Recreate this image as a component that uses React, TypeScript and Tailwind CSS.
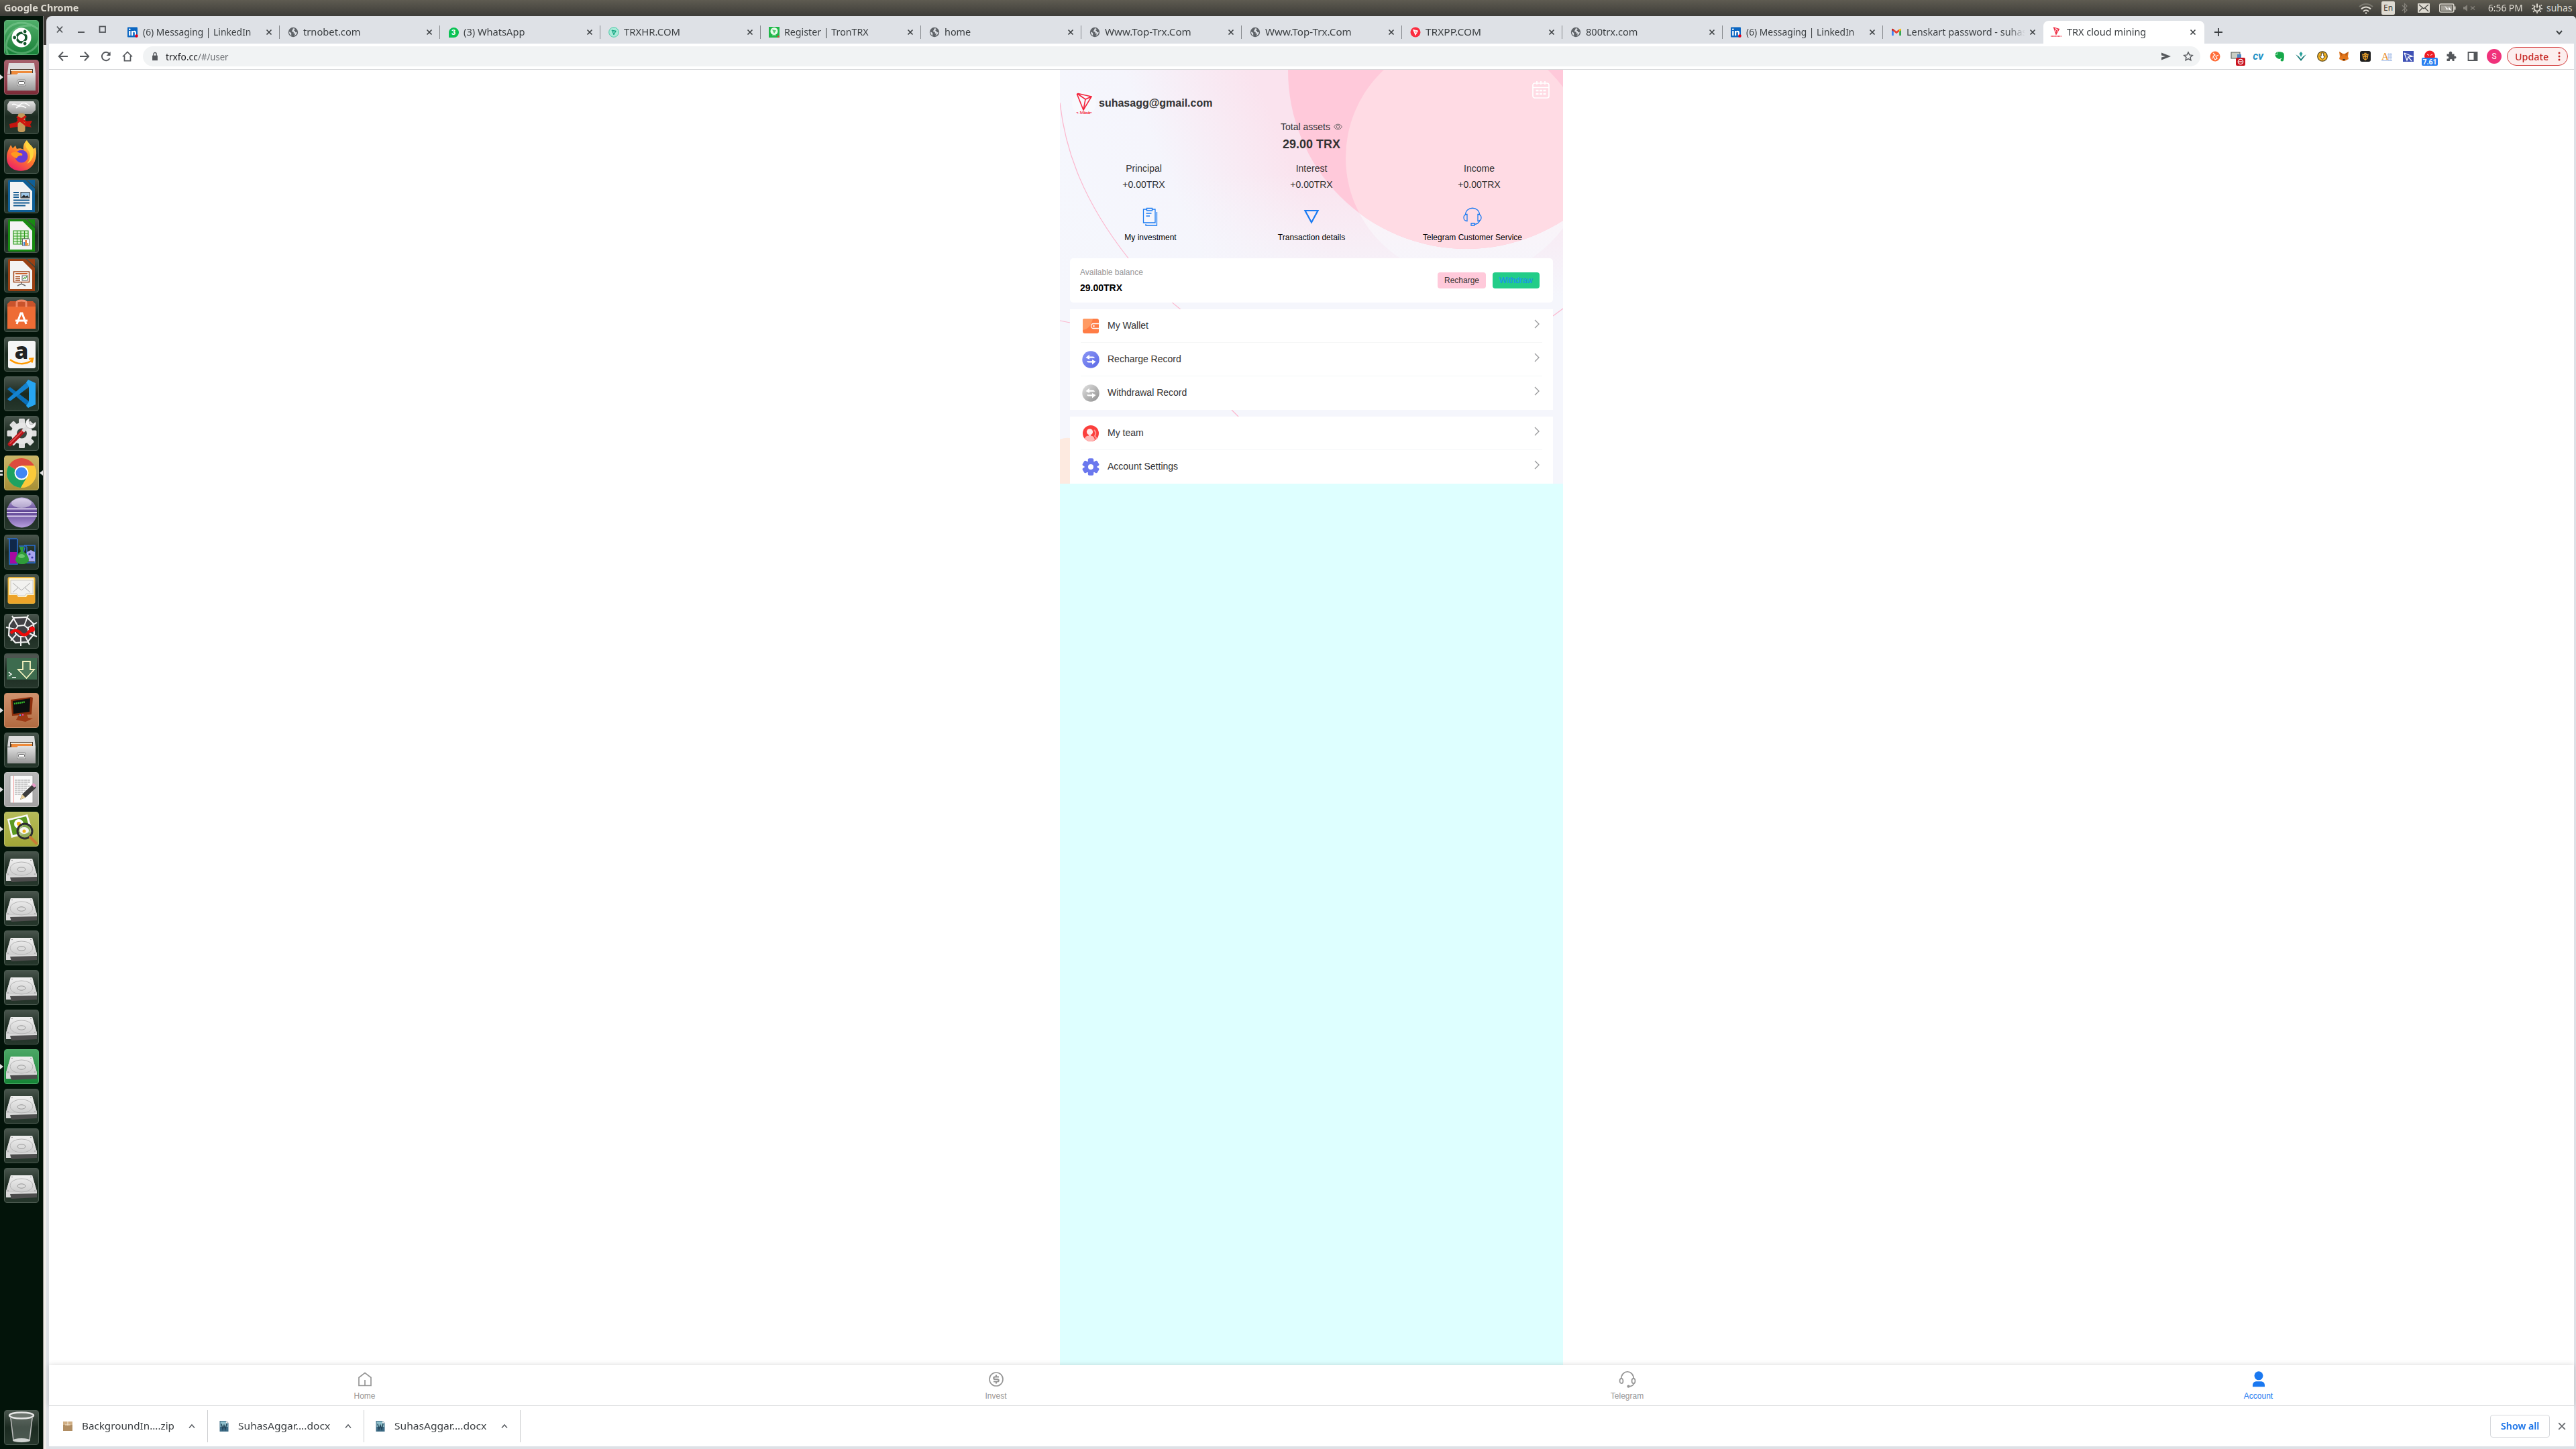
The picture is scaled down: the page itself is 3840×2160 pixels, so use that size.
import React, { useLayoutEffect, useRef, useState } from "react";

/* Text squeezed or stretched to a known run length. */
function Fit({ w, className = "", children }: { w: number; className?: string; children: string }) {
  const ref = useRef<HTMLSpanElement>(null);
  const [k, setK] = useState(1);
  useLayoutEffect(() => {
    if (ref.current) setK(w / ref.current.offsetWidth);
  }, [w]);
  return (
    <span className={`block shrink-0 whitespace-nowrap ${className}`} style={{ width: w }}>
      <span ref={ref} className="inline-block origin-left" style={{ transform: `scaleX(${k})` }}>
        {children}
      </span>
    </span>
  );
}

/* ---------- favicons ---------- */
const Globe = () => (
  <svg viewBox="0 0 16 16" className="size-4 shrink-0">
    <circle cx="8" cy="8" r="7.2" fill="#5f6368" />
    <path d="M9 2.2c-1.600.3-2.200 1.100-1.600 2 .5.800-1.800 1-1.500 2.200.2.900 1.900.5 2.600 1.300.6.900-.2 1.400.4 2.200.5.600 1.300-.4 2 .3.500.700-.8 1.900-1.900 2.900 3-.3 4.800-2.700 4.700-5.300-1.500 1-2.600.3-2.700-.9 0-1.200-1.800-.5-1.700-1.700.1-1 1.400-.7 1.400-1.600 0-.700-.7-1.200-1.700-1.400zM2 7.500c1.300.2 2.700 1 3.200 2.100.4 1-.4 1.800.2 3.600C3.300 12.300 2 10.200 2 7.500z" fill="#dee1e6" />
  </svg>
);
const LinkedIn = () => (
  <svg viewBox="0 0 16 16" className="size-4 shrink-0">
    <rect width="15" height="15" x="0" y="0.500" rx="1" fill="#0a66c2" />
    <rect x="2.200" y="6" width="2.200" height="7" fill="#fff" />
    <circle cx="3.300" cy="3.700" r="1.300" fill="#fff" />
    <path d="M6 6h2.100v1c.5-.8 1.300-1.200 2.300-1.200 2 0 2.600 1.300 2.600 3.200v4h-2.200V9.500c0-1-.2-1.800-1.200-1.800s-1.400.8-1.400 1.800V13H6z" fill="#fff" />
    <circle cx="13.500" cy="13.500" r="2.300" fill="#e0001b" />
  </svg>
);
const WhatsApp = () => (
  <span className="flex size-4 shrink-0 items-center justify-center">
    <span className="flex size-[15px] items-center justify-center rounded-full rounded-bl-[3px] bg-[#0bc254] font-['Liberation_Sans'] text-[11px] leading-none font-bold text-white">3</span>
  </span>
);
const Trxhr = () => (
  <svg viewBox="0 0 16 16" className="size-4 shrink-0">
    <circle cx="8" cy="8" r="7.300" fill="#a9ead8" stroke="#4fc9a8" />
    <path d="M5 5l6.300 1.200L8 11.800zM5 5l3.200 2.600L11.300 6.200M8.200 7.600L8 11.800" fill="none" stroke="#10a37f" strokeWidth="1" />
  </svg>
);
const TronTrx = () => (
  <svg viewBox="0 0 16 16" className="size-4 shrink-0">
    <rect width="16" height="16" fill="#1fb848" />
    <circle cx="8" cy="6.500" r="5.500" fill="#e6fbe9" />
    <path d="M5 4l6 1.200L8 10zM5 12h6v1.500H5z" fill="#5cc877" />
    <circle cx="14.200" cy="14.500" r="1.300" fill="#e53935" />
  </svg>
);
const Trxpp = () => (
  <svg viewBox="0 0 16 16" className="size-4 shrink-0">
    <circle cx="8" cy="8" r="7.500" fill="#fb2c3f" />
    <path d="M4.800 4.500l6.500 1.500L8 12zM4.800 4.500l3.400 3L11.300 6M8.200 7.500L8 12" fill="none" stroke="#fff" strokeWidth="1.100" />
  </svg>
);
const Gmail = () => (
  <svg viewBox="0 0 16 16" className="size-4 shrink-0">
    <path d="M1 4v9h2.800V6.500z" fill="#4285f4" />
    <path d="M15 4v9h-2.800V6.500z" fill="#34a853" />
    <path d="M3.800 3.500L8 6.700l4.200-3.200v3.600L8 10.300 3.800 7.100z" fill="#ea4335" />
    <path d="M1 4.200c0-1.500 1.600-1.900 2.800-.9v3.800L1 5z" fill="#c5221f" />
    <path d="M15 4.200c0-1.500-1.600-1.900-2.800-.9v3.800L15 5z" fill="#fbbc04" />
  </svg>
);
const TrxMining = () => (
  <svg viewBox="0 0 16 16" className="size-4 shrink-0">
    <path d="M4.500 1l8 2.300-4.500 8zM4.500 1l4 4.500 4-2.200M8.500 5.500L8 11.300" fill="none" stroke="#ef2a41" strokeWidth="1.100" />
    <path d="M0 14h16" stroke="#ef2a41" strokeWidth="1.500" strokeDasharray="1.500 .6" />
  </svg>
);

const X = ({ className = "" }: { className?: string }) => (
  <svg viewBox="0 0 10 10" className={`size-[10px] shrink-0 ${className}`}>
    <path d="M1.500 1.500l7 7M8.500 1.500l-7 7" stroke="currentColor" strokeWidth="1.700" />
  </svg>
);

const tabs: { icon: React.ReactNode; text: string; w: number }[] = [
  { icon: <LinkedIn />, text: "(6) Messaging | LinkedIn", w: 161 },
  { icon: <Globe />, text: "trnobet.com", w: 86 },
  { icon: <WhatsApp />, text: "(3) WhatsApp", w: 92 },
  { icon: <Trxhr />, text: "TRXHR.COM", w: 84 },
  { icon: <TronTrx />, text: "Register | TronTRX", w: 126 },
  { icon: <Globe />, text: "home", w: 39 },
  { icon: <Globe />, text: "Www.Top-Trx.Com", w: 129 },
  { icon: <Globe />, text: "Www.Top-Trx.Com", w: 129 },
  { icon: <Trxpp />, text: "TRXPP.COM", w: 83 },
  { icon: <Globe />, text: "800trx.com", w: 77 },
  { icon: <LinkedIn />, text: "(6) Messaging | LinkedIn", w: 161 },
  { icon: <Gmail />, text: "Lenskart password - suhasagg", w: 205 },
];

/* ---------- launcher ---------- */
const Ubuntu = () => (
  <>
    <path d="M0 22C8 2 30-2 52 14M6 52C-4 30 14 6 40 8M52 30C46 50 22 56 4 40" fill="none" stroke="#8fd3a0" strokeWidth="3" opacity=".45" />
    <circle cx="26" cy="26" r="14.500" fill="#fff" />
    <circle cx="26" cy="26" r="7" fill="none" stroke="#12572b" strokeWidth="3.600" />
    {[60, 180, 300].map((a) => (
      <g key={a} transform={`rotate(${a} 26 26)`}>
        <circle cx="36" cy="26" r="3.700" fill="#fff" />
        <circle cx="36.300" cy="26" r="2.400" fill="#12572b" />
      </g>
    ))}
  </>
);
const Files = () => (
  <>
    <path d="M7 5h38l2 16H5z" fill="#dcdcdc" />
    <rect x="9" y="14" width="34" height="9" fill="#4a3a2c" />
    <path d="M10 15h32v2H10z" fill="#f3ead8" />
    <path d="M11 17h31v6H11z" fill="#ee8a3a" />
    <path d="M5 22h14l2-2h26v26H5z" fill="url(#metal)" />
    <rect x="19.500" y="30" width="13" height="9" rx="2" fill="#d9d9d9" stroke="#8b8b8b" />
    <rect x="21.500" y="32.500" width="9" height="4" rx="1" fill="#fff" stroke="#666" />
  </>
);
const Gavel = () => (
  <>
    <path d="M8 3h36l3 5v8l-6 6H12l-7-6V8z" fill="url(#metal)" />
    <path d="M12 8c5-3 8 4 12 0s8-3 14 2M18 13c4-4 10-4 15 0" fill="none" stroke="#fff" strokeWidth="1.500" />
    <path d="M8 37c8-4 24-4 34-5l-3 6 2 4c-10-3-22-1-32 1z" fill="#c3150f" />
    <rect x="20.500" y="21" width="11" height="28" rx="4" fill="#c49a5a" />
    <path d="M19 26l14 8M33 25l-14 10M20 29c5 4 9 6 13 10" stroke="#d0150f" strokeWidth="3" />
  </>
);
const Firefox = () => (
  <>
    <path d="M4 27C4 19 8 14 10 9l3 5 4-4 2 5c3-1 7-1 10 1-1-5 1-11 5-14 3 6 8 8 10 13l3-2c3 10 0 25-9 31-7 5-19 5-26 0C6 40 4 34 4 27z" fill="url(#ff)" />
    <circle cx="26" cy="26" r="9.500" fill="#6a3bd6" />
    <path d="M10 22c4-3 9-3 13-1 4 0 5 2 4 4-4-1-7 1-8 4-3-1-7-3-9-7z" fill="#ff9a1f" />
    <path d="M36 17c5 7 3 15-2 20 8-3 12-13 9-22-2-4-6-8-9-12-3 5-2 10 2 14z" fill="#ffd63c" />
  </>
);
function Doc({ c, children }: { c: string; children: React.ReactNode }) {
  return (
    <>
      <path d="M8 2h24l14 13v35H8a2 2 0 0 1-2-2V4a2 2 0 0 1 2-2z" fill={c} />
      <path d="M9 5h19l14 14v28H9z" fill="#f3f3f3" />
      <path d="M34 2h12v11z" fill={c} />
      {children}
    </>
  );
}
const Writer = () => (
  <Doc c="#0f5f97">
    <path d="M14 21h8M14 24.500h8M14 28h8M14 32.500h24M14 36.500h24M14 40.500h18" stroke="#125a91" strokeWidth="2" />
    <rect x="25" y="20.500" width="13" height="8.500" fill="#9fc7e8" stroke="#333" />
    <path d="M25.500 28.500l4-4 3 2.500 2-2 3 3.500z" fill="#222" />
  </Doc>
);
const Calc = () => (
  <Doc c="#188a12">
    <rect x="14" y="19" width="22" height="20" fill="#d8f3d0" />
    <path d="M14 19h22v20H14zM14 23h22M14 27h22M14 31h22M14 35h22M19.500 19v20M25 19v20M30.500 19v20" fill="none" stroke="#2f9a20" strokeWidth="1.200" />
    <rect x="27.500" y="31" width="10" height="10" fill="#fff" stroke="#666" />
    <path d="M29 36h2.300v5H29z" fill="#3a8bd8" /><path d="M31.500 33h2.300v8h-2.300z" fill="#e06b1d" /><path d="M34 37h2.300v4H34z" fill="#e8b03c" />
  </Doc>
);
const Impress = () => (
  <Doc c="#9a4013">
    <rect x="14.500" y="21" width="23" height="15.500" fill="#fff" stroke="#a0461a" strokeWidth="1.500" />
    <path d="M17 24h18" stroke="#c8622c" strokeWidth="2" />
    <path d="M17 28.500h7M17 31.500h7M17 34h7" stroke="#a0461a" strokeWidth="1.600" />
    <rect x="27" y="27" width="8" height="7" fill="#fff" stroke="#555" />
    <path d="M28.500 32l2-2 1.500 1 2-3" stroke="#2f9a20" fill="none" strokeWidth="1.200" />
    <path d="M26 37v2M20 42l6-3 6 3" stroke="#666" strokeWidth="1.500" fill="none" />
  </Doc>
);
const Software = () => (
  <>
    <path d="M5 10l4-4h34l4 4v6H5z" fill="#c9532b" />
    <path d="M5 14h42v33H5z" fill="#ee6c35" />
    <path d="M19 15V8c0-4 14-4 14 0v7" fill="none" stroke="#f08a68" strokeWidth="3" />
    <path d="M19 40l6-16h2l6 16M17 35h18" fill="none" stroke="#fff" strokeWidth="3" />
  </>
);
const Amazon = () => (
  <>
    <rect x="6" y="6" width="41" height="41" rx="3" fill="#f5f5f5" />
    <text x="26" y="33" textAnchor="middle" fontFamily="Open Sans, sans-serif" fontWeight="800" fontSize="33" fill="#222">a</text>
    <path d="M9 34c10 8 23 8 33 1M37 33l6-.5-1.500 6" fill="none" stroke="#ff9900" strokeWidth="2.500" />
  </>
);
const VsCode = () => (
  <>
    <path d="M5 19l4-3 28 21v9z" fill="#0a6fb8" />
    <path d="M5 34l4 3 28-21V6z" fill="#1483d0" />
    <path d="M36 5l11 5v32l-11 5-3-3 4-6V15l-4-6z" fill="#27a5f2" />
  </>
);
const Settings = () => (
  <>
    {[0, 45, 90, 135].map((a) => (
      <rect key={a} x="22" y="4" width="9" height="44" rx="1.500" fill="#dedede" transform={`rotate(${a} 26.500 26)`} />
    ))}
    <circle cx="26.500" cy="26" r="16" fill="#e6e6e6" />
    <circle cx="26.500" cy="26" r="7.500" fill="#3b4640" />
    <path d="M9 42L28 23" stroke="#b9151b" strokeWidth="6.500" strokeLinecap="round" />
    <path d="M9 41L27 23" stroke="#e65a5a" strokeWidth="1.500" strokeLinecap="round" />
    <path d="M28 23l8-8" stroke="#dcdcdc" strokeWidth="5" />
    <path d="M38 4c-5 1-7 6-5 10 2 5 8 6 12 3 2-2 3-5 2-8l-5 4-4-1-1-4z" fill="#f4f4f4" stroke="#999" strokeWidth=".6" />
  </>
);
const Chrome = () => (
  <>
    <circle cx="26" cy="26" r="22" fill="#fbc93a" />
    <path d="M26 26L7 15A22 22 0 0 1 45 15H26z" fill="#dd4b3e" />
    <path d="M7 15A22 22 0 0 0 25 48l10-17-9-5z" fill="#1da261" />
    <path d="M26 15h19a22 22 0 0 1-20 33l10-17z" fill="#fbc93a" />
    <circle cx="26" cy="26" r="10.500" fill="#fff" />
    <circle cx="26" cy="26" r="8.500" fill="#4086f4" />
  </>
);
const Eclipse = () => (
  <>
    <circle cx="26.500" cy="26" r="22.500" fill="url(#ecl)" />
    <path d="M4 20.500h45M4 26h45M4 31.500h45" stroke="#d9cdec" strokeWidth="2" />
    <path d="M4 23h45M4 29h45" stroke="#6a519e" strokeWidth="2" />
    <ellipse cx="26" cy="12" rx="15" ry="7" fill="#fff" opacity=".45" />
  </>
);
const Flasks = () => (
  <>
    <path d="M5 6h14M8 6v38h12V6" fill="#10284a" stroke="#2a6fd0" strokeWidth="1.500" />
    <path d="M9 26h10v17H9z" fill="#a60aa0" />
    <path d="M22 17h12M31 19l-2 8M30 16h16v26H34V18" fill="none" stroke="#2a6fd0" strokeWidth="1.500" />
    <path d="M34 26l6-3 6 3v14H32z" fill="#a8a5f0" />
    <circle cx="38" cy="29" r="1.600" fill="#3c3aa8" /><circle cx="42" cy="34" r="1.600" fill="#3c3aa8" />
    <path d="M23 18h7l-2 7c6 3 9 8 9 13-2 8-18 8-20 0 0-5 4-10 8-13z" fill="#2f9d3a" />
    <ellipse cx="26" cy="32" rx="5" ry="3" fill="#8fe08f" opacity=".6" />
  </>
);
const Mail = () => (
  <>
    <rect x="6.500" y="5" width="39" height="38" rx="2" fill="#fdf3cf" stroke="#e8b33a" strokeWidth="2" />
    <path d="M6 31h13l2 3h12l2-3h11v12H6z" fill="#eda42a" />
    <path d="M10 9h33v20H33l-2 3H21l-2-3h-9z" fill="#f2f2f0" stroke="#bbb" strokeWidth=".7" />
    <path d="M13 13l13 11 13-11M13 27l8-7M39 27l-8-7" fill="none" stroke="#aaa" strokeWidth="1" />
  </>
);
const Web = () => (
  <>
    <path d="M15 6l19-1 10 10 1 15-10 12-18 1L7 32 8 16z" fill="#414145" stroke="#efefef" strokeWidth="2.200" />
    <path d="M12 3l9 16M36 2l-6 16M49 13l-14 8M49 34l-14-6M38 46l-7-14M25 48v-14M10 40l9-10M3 20l14 3" stroke="#efefef" strokeWidth="2" />
    <path d="M21 18l9-1 6 5v7l-6 5h-7l-6-5v-6z" fill="none" stroke="#efefef" strokeWidth="2" />
    <path d="M10 29c6-6 10-5 15 0s9 2 13-3l6-4" fill="none" stroke="#ee0a0a" strokeWidth="4.500" />
    <circle cx="42" cy="23" r="4" fill="#ee0a0a" />
  </>
);
const DownTerm = () => (
  <>
    <rect x="4" y="6" width="45" height="33" fill="#3d6b4e" />
    <rect x="2" y="2" width="49" height="5" fill="#4d5550" />
    <path d="M7 28l4 3-4 3M12 36h6" fill="none" stroke="#fff" strokeWidth="1.500" />
    <path d="M28 12h11v12h6L33.500 37 21 24h7z" fill="#4f7a5c" stroke="#f5f3c0" strokeWidth="1.800" />
  </>
);
const Terminal = () => (
  <>
    <path d="M10 10l30-4 3 1-2 25-29 2z" fill="#8c2f0c" />
    <path d="M13 12l26-4-1 20-24 3z" fill="#0c0f0e" />
    <path d="M15 16l16-2.500" stroke="#35b52a" strokeWidth="2.500" strokeDasharray="2 .8" />
    <path d="M22 33l12-1 2 5 7 1-11 5-14-3z" fill="#9c3a15" />
    <circle cx="24" cy="33" r="1.200" fill="#4af" /><circle cx="28" cy="32.500" r="1.200" fill="#f4a" />
  </>
);
const Editor = () => (
  <>
    <rect x="9" y="5" width="34" height="41" rx="1" fill="#fafafa" stroke="#9a9a9a" />
    <path d="M14.500 5v41" stroke="#f2a3a3" />
    <path d="M16 12h23M16 15h23M16 18h20M16 21h23M16 24h18M16 27h16M16 30h12M16 33h9" stroke="#9a9a9a" strokeWidth="1" strokeDasharray="4 .7" />
    <path d="M24 41l3-8 16-15 5 5-16 15z" fill="#3d3d3d" />
    <path d="M41 19l3-3 4 4-3 3z" fill="#e59ac6" />
    <path d="M24 41l3-8 5 5z" fill="#e8cf9a" />
  </>
);
const Viewer = () => (
  <>
    <path d="M5 11l30-7 8 26-32 9z" fill="#fafafa" />
    <path d="M8 13l25-6 6 21-26 7z" fill="#5c9a22" />
    <circle cx="22" cy="18" r="7" fill="#fff" /><circle cx="22" cy="18" r="3" fill="#f0b21a" />
    <circle cx="31" cy="29" r="11" fill="#8fae62" fillOpacity=".75" stroke="#2d2d30" strokeWidth="3" />
    <ellipse cx="30" cy="28" rx="7" ry="5" fill="#f7f7f2" />
    <circle cx="30" cy="29" r="2.500" fill="#f0b21a" />
    <path d="M39 38l9 9" stroke="#c97b35" strokeWidth="4" strokeLinecap="round" />
  </>
);
const Disk = () => (
  <>
    <path d="M10 11h32l7 24v9H3v-9z" fill="#c8c8c8" />
    <path d="M10 11h32l7 24H3z" fill="url(#disk)" />
    <path d="M3 36h46v8H3z" fill="#d9d9d9" />
    <path d="M9 39l40-1v6l-38 2z" fill="#4c4c4c" />
    <ellipse cx="26" cy="26" rx="17" ry="10" fill="none" stroke="#b5b5b5" />
    <ellipse cx="26" cy="27" rx="6" ry="3.200" fill="#dcdcdc" stroke="#999" />
    <circle cx="12" cy="13.500" r=".8" fill="#888" /><circle cx="40" cy="13.500" r=".8" fill="#888" /><circle cx="6" cy="34" r=".8" fill="#888" /><circle cx="46" cy="34" r=".8" fill="#888" />
  </>
);
const Trash = () => (
  <>
    <path d="M9 11h34l-4 35c-6 3-20 3-26 0z" fill="#a8b0ab" opacity=".3" />
    <path d="M10 12l4 33M42 12l-4 33" stroke="#bcbcbc" strokeWidth="1.500" />
    <ellipse cx="26" cy="8" rx="18" ry="4.500" fill="#6d756f" stroke="#e6e6e6" strokeWidth="2.500" />
    <ellipse cx="26" cy="45" rx="13" ry="3" fill="#cfd3d0" />
  </>
);

const glass = "bg-linear-to-b from-[#49554d] via-[#1b2a20] to-[#26372c] border-[#4b5a50]";
const apps: { el: React.ReactNode; bg: string; mark?: "one" | "chrome" }[] = [
  { el: <Ubuntu />, bg: "bg-linear-to-b from-[#4fae6a] to-[#168038] border-[#5fb377]" },
  { el: <Files />, bg: "bg-linear-to-b from-[#a6616c] to-[#7d2b38] border-[#a0606a]", mark: "one" },
  { el: <Gavel />, bg: glass },
  { el: <Firefox />, bg: glass },
  { el: <Writer />, bg: glass },
  { el: <Calc />, bg: glass },
  { el: <Impress />, bg: glass },
  { el: <Software />, bg: glass },
  { el: <Amazon />, bg: glass },
  { el: <VsCode />, bg: glass },
  { el: <Settings />, bg: glass },
  { el: <Chrome />, bg: "bg-linear-to-b from-[#c9b566] to-[#a68f35] border-[#c4b56f]", mark: "chrome" },
  { el: <Eclipse />, bg: glass },
  { el: <Flasks />, bg: glass },
  { el: <Mail />, bg: glass },
  { el: <Web />, bg: glass },
  { el: <DownTerm />, bg: glass },
  { el: <Terminal />, bg: "bg-linear-to-b from-[#d0936d] to-[#b06a40] border-[#c98d68]", mark: "one" },
  { el: <Files />, bg: glass },
  { el: <Editor />, bg: "bg-linear-to-b from-[#b9b9b9] to-[#a2a2a2] border-[#c4c4c4]", mark: "one" },
  { el: <Viewer />, bg: "bg-linear-to-b from-[#b5bb59] to-[#a1a637] border-[#b9be68]", mark: "one" },
  ...[0, 1, 2, 3, 4].map(() => ({ el: <Disk />, bg: glass })),
  { el: <Disk />, bg: "bg-linear-to-b from-[#4aa765] to-[#138436] border-[#4fae6a]", mark: "one" as const },
  ...[0, 1, 2].map(() => ({ el: <Disk />, bg: glass })),
];

function Tile({ el, bg, mark }: { el: React.ReactNode; bg: string; mark?: "one" | "chrome" }) {
  return (
    <div className="flex h-[52px] w-16 shrink-0 items-center">
      <svg viewBox="0 0 6 12" className="h-3 w-[6px] shrink-0">
        {mark === "one" && <path d="M0 2l5 4-5 4z" fill="#e2e2e2" />}
        {mark === "chrome" && <path d="M0 2h4v3H0zM0 7h4v3H0z" fill="#e2e2e2" />}
      </svg>
      <div className={`size-[52px] shrink-0 rounded-[4px] border ${bg}`}>
        <svg viewBox="1 1 50 50" className="size-full">{el}</svg>
      </div>
      <svg viewBox="0 0 6 12" className="h-3 w-[6px] shrink-0">
        {mark === "chrome" && <path d="M6 2L1 6l5 4z" fill="#e2e2e2" />}
      </svg>
    </div>
  );
}

function Launcher() {
  return (
    <div className="flex h-[2136px] w-16 shrink-0 flex-col justify-between overflow-hidden bg-[#03140a] pt-[6px] pb-[6px]">
      <svg className="absolute size-0">
        <defs>
          <linearGradient id="metal" x2="0" y2="1"><stop stopColor="#e4e4e4" /><stop offset="1" stopColor="#989898" /></linearGradient>
          <linearGradient id="disk" x2="0" y2="1"><stop stopColor="#f0f0f0" /><stop offset="1" stopColor="#cfcfcf" /></linearGradient>
          <linearGradient id="ff" x1=".8" y1="0" x2=".2" y2="1"><stop stopColor="#ffe24a" /><stop offset=".5" stopColor="#ff7b2b" /><stop offset="1" stopColor="#ec1a6b" /></linearGradient>
          <linearGradient id="ecl" x2="0" y2="1"><stop stopColor="#c3b3e0" /><stop offset=".45" stopColor="#5a4190" /><stop offset="1" stopColor="#b9a0e0" /></linearGradient>
        </defs>
      </svg>
      <div className="flex flex-col gap-[7px]">
        {apps.map((a, i) => <Tile key={i} {...a} />)}
      </div>
      <Tile el={<Trash />} bg={glass} />
    </div>
  );
}

/* ---------- desktop panel ---------- */
function TopPanel() {
  return (
    <div className="flex h-6 items-center justify-between bg-linear-to-b from-[#5e5b51] to-[#3d3c38] pr-[5px] pl-[6px] font-['Noto_Sans',sans-serif] text-[#dfdbd2]">
      <Fit w={111} className="text-[14px] leading-6 font-bold">Google Chrome</Fit>
      <div className="flex items-center">
        <svg viewBox="0 0 24 20" className="mr-[11px] h-5 w-6" fill="none" strokeWidth="2">
          <path d="M2 8c6-5.500 14-5.500 20 0" stroke="#7b7970" />
          <path d="M5 11.500c4-4 10-4 14 0M8 15c2.500-2.500 5.500-2.500 8 0" stroke="#dfdbd2" />
          <circle cx="12" cy="17.500" r="1.200" fill="#dfdbd2" stroke="none" />
        </svg>
        <span className="mr-[10px] flex h-5 w-5 items-center justify-center rounded-[2px] bg-[#dfdbd2] text-[12px] text-[#3c3b37]">En</span>
        <svg viewBox="0 0 10 16" className="mr-[14px] h-4 w-[10px]"><path d="M1 4l7 7-3.500 3.500v-13L8 5l-7 7" fill="none" stroke="#85827a" strokeWidth="1.200" /></svg>
        <svg viewBox="0 0 18 14" className="mr-[14px] h-[14px] w-[18px]"><rect width="18" height="14" rx="1" fill="#dfdbd2" /><path d="M2 2l7 6 7-6M2 12l5-5M16 12l-5-5" fill="none" stroke="#45443f" strokeWidth="1.300" /></svg>
        <svg viewBox="0 0 25 14" className="mr-[10px] h-[14px] w-[25px]"><rect x=".8" y="1" width="21" height="12" rx="1.500" fill="none" stroke="#dfdbd2" strokeWidth="1.500" /><rect x="3" y="3" width="16.500" height="8" fill="#a19e96" /><path d="M22.500 4.500h2v5h-2z" fill="#dfdbd2" /><path d="M8 3.500l6 5.500.5-4 4 6-6-2.500-.5 2z" fill="#fff" /></svg>
        <svg viewBox="0 0 20 14" className="mr-[18px] h-[14px] w-5"><path d="M1 5h2.500L7 2v10L3.500 9H1z" fill="#85827a" /><path d="M12 4.500l6 5M18 4.500l-6 5" stroke="#85827a" strokeWidth="1.500" /></svg>
        <Fit w={52} className="mr-[13px] text-[14px] leading-6">6:56 PM</Fit>
        <svg viewBox="0 0 16 16" className="mr-[6px] size-4" fill="none" stroke="#dfdbd2">
          <path d="M5 4.600a4.600 4.600 0 1 0 6 0M8 1.500v6" strokeWidth="2" />
          <path d="M2.600 4.500L1 3.500M13.400 4.500L15 3.500M1.800 9H0M14.200 9H16M3.600 12.400l-1.300 1.400M12.400 12.400l1.300 1.400M8 14v2" strokeWidth="1.800" />
        </svg>
        <Fit w={39} className="text-[14px] leading-6">suhas</Fit>
      </div>
    </div>
  );
}

/* ---------- browser chrome ---------- */
function TabStrip() {
  return (
    <div className="flex h-[41px] items-end rounded-tl-[8px] rounded-tr-[5px] bg-[#dee1e6] font-['Noto_Sans',sans-serif] text-[14px] text-[#3c4043]">
      <div className="flex h-[41px] w-[109px] shrink-0 items-center gap-5 pl-[14px] text-[#55585c]">
        <svg viewBox="0 0 12 12" className="mb-px size-3"><path d="M2 1.500l8 9M10 1.500l-8 9" stroke="currentColor" strokeWidth="1.800" /></svg>
        <svg viewBox="0 0 12 12" className="size-3"><path d="M1 9h10" stroke="currentColor" strokeWidth="2" /></svg>
        <svg viewBox="0 0 12 12" className="mb-px size-3"><rect x="1.500" y="1.500" width="8.500" height="8.500" fill="none" stroke="currentColor" strokeWidth="1.800" /></svg>
      </div>
      {tabs.map((t, i) => (
        <div key={i} className="flex h-[34px] w-[239px] shrink-0 items-center pl-3">
          {t.icon}
          <div className={`ml-[7px] w-[177px] overflow-hidden ${i === 11 ? "mask-r-from-85% mask-r-to-100%" : ""}`}>
            <Fit w={t.w} className="leading-5">{t.text}</Fit>
          </div>
          <X className="ml-[6px]" />
          {i < 11 && <span className="ml-auto h-5 w-px bg-[#85888c]" />}
        </div>
      ))}
      <div className="flex h-[34px] w-[240px] shrink-0 items-center rounded-t-[8px] bg-white pl-[11px]">
        <TrxMining />
        <Fit w={118} className="ml-2 leading-5">TRX cloud mining</Fit>
        <X className="ml-[65px]" />
      </div>
      <svg viewBox="0 0 14 14" className="mb-[10px] ml-[14px] size-[14px]"><path d="M7 1v12M1 7h12" stroke="#3c4043" strokeWidth="1.800" /></svg>
      <svg viewBox="0 0 12 12" className="mr-[19px] mb-[11px] ml-auto size-3"><path d="M2 4l4 4.500L10 4" fill="none" stroke="#3c4043" strokeWidth="1.900" /></svg>
    </div>
  );
}

const extensions: React.ReactNode[] = [
  <><circle cx="8" cy="8" r="7.500" fill="#ff6c37" /><path d="M5 3l3 3-3 2 3 5 3-2-2-3 4-2M3 11l2-1" fill="none" stroke="#fff" strokeWidth="1.200" /></>,
  <><rect x="0" y="2" width="13" height="9" fill="#c9cec4" stroke="#555b55" /><rect x="9" y="5" width="6" height="6" fill="#4d86c4" /><rect x="7" y="10" width="14" height="12" rx="2" fill="#c9131f" /><circle cx="14" cy="16" r="3.700" fill="none" stroke="#fff" strokeWidth="1.300" /><path d="M11.500 16h5" stroke="#fff" strokeWidth="1.300" /></>,
  <><text x="8" y="12.500" textAnchor="middle" fontFamily="Roboto, sans-serif" fontWeight="900" fontStyle="italic" fontSize="12" fill="#1b8fc4">CV</text></>,
  <><path d="M5 1.500C9 .5 14 2 14.500 4c.8 4 .3 9-1 11-1.500 1-4 .5-4-1.500 0-1.200 1-1.700 2-1.500-.5-1.500-2-1-3 0C5 12 1.500 9 1.500 5.500H5z" fill="#16a84a" /><path d="M4.500 1L1 4.700h3.500z" fill="#16a84a" /></>,
  <><path d="M0 5l4.500 3L8 12l3.500-4L16 5 8 15z" fill="#157a77" /><path d="M8 1l2.500 3L8 9 5.500 4z" fill="#2aa19b" /></>,
  <><circle cx="8" cy="8" r="7.200" fill="#fbb826" stroke="#4b3b12" strokeWidth="1.300" /><path d="M6.200 3h3.600v4.500h2.500L8 12.500 3.700 7.500h2.500z" fill="#fff" stroke="#4b3b12" /></>,
  <><path d="M1 1l5 3h4l5-3-1 7 1 4-4 2-2 1H7l-2-1-4-2 1-4z" fill="#e2761b" /><path d="M1 1l5 3-1 4zM15 1l-5 3 1 4z" fill="#b85a15" /><path d="M6 12h4l-1 2H7z" fill="#3a3a3a" /></>,
  <><rect width="16" height="16" rx="3" fill="#1f1f1f" /><path d="M4 5l3 1V3.500h2V6l3-1-1 6-3 2.500L5 11zM8 6v7M5 8.500h6" fill="none" stroke="#f2a52a" strokeWidth="1.300" /></>,
  <><path d="M9 5h7M9 7.500h7M9 10h7M0 14.500h16M11 3v12M14 3v12" stroke="#a9c0e8" strokeWidth="1" /><text x="5.500" y="13" textAnchor="middle" fontFamily="Liberation Serif, serif" fontSize="15" fill="#e8912c">A</text></>,
  <><rect width="16" height="16" fill="#3f51b5" /><path d="M2 3l12 5-6 1 5 6M2 3l4 11 2-5" fill="none" stroke="#fff" strokeWidth="1.300" /></>,
  <><circle cx="8" cy="7.500" r="8" fill="#ee1c25" /><path d="M4 5l3 1.500M12 5L9 6.500" stroke="#fff" /><rect x="-4" y="10" width="24" height="12" rx="2" fill="#2a7ff0" /><text x="8" y="20" textAnchor="middle" fontFamily="Roboto, sans-serif" fontWeight="700" fontSize="10.500" fill="#fff">7.61</text></>,
  <><path d="M1.500 4.500H5C4 2 5.500.8 7 .8s3 1.200 2 3.700h3.500V8c2-.8 3 .4 3 1.600s-1 2.400-3 1.700V15H9.500c.7-2.200-.4-3-1.700-3s-2.500.8-1.800 3H1.500v-3.500c2 .5 2.700-.6 2.700-1.700S3.500 7.700 1.500 8.300z" fill="#54575b" /></>,
  <><path d="M1.500 2h13v12h-13z" fill="none" stroke="#54575b" strokeWidth="1.800" /><path d="M9.500 2h5v12h-5z" fill="#54575b" /></>,
];

function Toolbar() {
  return (
    <div className="flex h-[39px] items-center border-b border-[#d6d7d9] bg-white font-['Noto_Sans',sans-serif] text-[14px] text-[#54575b]">
      <div className="flex w-[140px] shrink-0 gap-4 pl-[13px]">
        <svg viewBox="0 0 16 16" className="size-4" fill="none" stroke="currentColor" strokeWidth="1.900"><path d="M15 8H2M8 1.500L1.800 8 8 14.500" /></svg>
        <svg viewBox="0 0 16 16" className="size-4" fill="none" stroke="currentColor" strokeWidth="1.900"><path d="M1 8h13M8 1.500L14.200 8 8 14.500" /></svg>
        <svg viewBox="0 0 16 16" className="size-4" fill="none" stroke="currentColor" strokeWidth="1.900"><path d="M13.500 11A6.200 6.200 0 1 1 12.800 4L14 5.500" /><path d="M14.600 1v6H8.700z" fill="currentColor" stroke="none" /></svg>
        <svg viewBox="0 0 16 16" className="size-4" fill="none" stroke="currentColor" strokeWidth="1.700"><path d="M1 8.500L8 1.500l7 7M3.500 7v7.700h9V7" /></svg>
      </div>
      <div className="flex h-[30px] w-[3067px] shrink-0 items-center rounded-full bg-[#f1f3f4] pr-[10px] pl-3">
        <svg viewBox="0 0 12 16" className="mr-[10px] h-[14px] w-3"><path d="M1.500 6.500h9V15h-9z" fill="currentColor" /><path d="M3.500 7V4.200a2.500 2.500 0 0 1 5 0V7" fill="none" stroke="currentColor" strokeWidth="1.500" /></svg>
        <Fit w={48} className="text-[#202124]">trxfo.cc</Fit>
        <Fit w={46} className="text-[#6b6e72]">/#/user</Fit>
        <svg viewBox="0 0 16 16" className="mr-[17px] ml-auto size-4"><path d="M1 2.500L15 8 1 13.500V9.500L7 8 1 6.500z" fill="currentColor" /></svg>
        <svg viewBox="0 0 16 16" className="size-4"><path d="M8 1.800l1.900 4.100 4.400.5-3.300 3 .9 4.400L8 11.600l-3.900 2.200.9-4.400-3.300-3 4.400-.5z" fill="none" stroke="currentColor" strokeWidth="1.400" /></svg>
      </div>
      <div className="flex gap-4 pl-[14px]">
        {extensions.map((e, i) => <svg key={i} viewBox="0 0 16 16" className="size-4 shrink-0 overflow-visible">{e}</svg>)}
      </div>
      <span className="ml-[13px] flex size-[22px] items-center justify-center rounded-full bg-[#f0327b] font-['Roboto'] text-[12px] text-white">S</span>
      <div className="ml-2 flex h-7 w-[91px] items-center rounded-full border border-[#d33a3a] bg-[#fceeee] pl-[11px] font-medium text-[#c5221f]">
        <Fit w={50}>Update</Fit>
        <svg viewBox="0 0 4 16" className="ml-[14px] h-4 w-1" fill="currentColor"><circle cx="2" cy="3" r="1.500" /><circle cx="2" cy="8" r="1.500" /><circle cx="2" cy="13" r="1.500" /></svg>
      </div>
    </div>
  );
}

/* ---------- account page ---------- */
const PageArt = () => (
  <svg viewBox="1580 104 750 617" className="absolute inset-0 size-full">
    <defs>
      <linearGradient id="base" x1="0" y1=".35" x2="1" y2="0">
        <stop stopColor="#f5f7fd" /><stop offset=".22" stopColor="#f5f5fc" /><stop offset=".45" stopColor="#fae3ee" /><stop offset="1" stopColor="#fae3ee" />
      </linearGradient>
      <linearGradient id="fade" x2="0" y2="1">
        <stop offset=".25" stopColor="#f5f6fc" stopOpacity="0" /><stop offset=".55" stopColor="#f5f6fc" />
      </linearGradient>
      <linearGradient id="pale" x2="0" y2="1">
        <stop offset=".5" stopColor="#fff1f5" /><stop offset=".95" stopColor="#f6f5fb" />
      </linearGradient>
      <clipPath id="big"><circle cx="2186" cy="105" r="266" /></clipPath>
    </defs>
    <rect x="1580" y="104" width="750" height="617" fill="url(#base)" />
    <rect x="1580" y="104" width="750" height="617" fill="url(#fade)" />
    <circle cx="2185" cy="235" r="179" fill="url(#pale)" />
    <circle cx="2186" cy="105" r="266" fill="#ffc9da" />
    <circle cx="2185" cy="235" r="179" fill="#ffdbe4" clipPath="url(#big)" />
    <g fill="none" stroke="#fcb6cd" strokeWidth="1.200">
      <path d="M1580 153C1588 225 1615 300 1682 385C1704 412 1730 438 1762 463" />
      <path d="M1580 478l15 3M1836 611l11 11M2315 471l15-11" />
    </g>
    <path d="M1580 655q8-3 15-2v68h-15z" fill="#fdeae0" />
  </svg>
);

const Calendar = () => (
  <svg viewBox="0 0 26 26" className="size-[26px]" fill="none" stroke="#fff" strokeWidth="1.700">
    <rect x="1" y="3" width="24" height="22" rx="3" /><path d="M1 9.500h24M7 0v5M13 0v5M19 0v5" />
    <path d="M5.500 14h4M11 14h4M16.500 14h4M5.500 19h4M11 19h4M16.500 19h4" strokeWidth="2.400" />
  </svg>
);

function Stat({ label }: { label: string }) {
  return (
    <div className="flex w-[250px] flex-col items-center text-[14px] leading-6 text-[#323233]">
      <span>{label}</span><span>+0.00TRX</span>
    </div>
  );
}
function Action({ label, children }: { label: string; children: React.ReactNode }) {
  return (
    <div className="flex w-[240px] flex-col items-center text-[12px] leading-4 text-black">
      <svg viewBox="0 0 30 30" className="mb-[8px] size-[30px]" fill="none" stroke="#1a7bf2" strokeWidth="1.300">{children}</svg>
      {label}
    </div>
  );
}
const Swap = ({ id, a, b }: { id: string; a: string; b: string }) => (
  <>
    <defs><linearGradient id={id} x2="1" y2="1"><stop stopColor={a} /><stop offset="1" stopColor={b} /></linearGradient></defs>
    <circle cx="13" cy="13" r="12.700" fill={`url(#${id})`} />
    <path d="M19 11.800c0-2-1-3.300-3-3.300h-5V5.500L5.500 10l5.500 3v-2.300h8zM7 14.200c0 2 1 3.300 3 3.300h5v3l5.500-4.500-5.500-3v2.300H7z" fill="#fff" />
  </>
);
const rowIcons: Record<string, React.ReactNode> = {
  "My Wallet": (
    <><rect x="1" y="2" width="24" height="22" rx="3" fill="#ff7c45" /><path d="M1 5a3 3 0 0 1 3-3h12Q13 17 1 19z" fill="#ff9a62" /><path d="M25 9.500h-8a3.500 3.500 0 0 0 0 7h8" fill="#ff7c45" stroke="#fff" strokeWidth="1.300" /><circle cx="17.500" cy="13" r="1.200" fill="#fff" /></>
  ),
  "Recharge Record": <Swap id="sw1" a="#8a96f5" b="#5b68e6" />,
  "Withdrawal Record": <Swap id="sw2" a="#e2e2e2" b="#8e8e8e" />,
  "My team": (
    <><circle cx="13" cy="13" r="12" fill="#fb3f3c" /><path d="M18 8q4 4 1 9 2.500 2 2.500 5" fill="none" stroke="#fd9591" strokeWidth="2" /><circle cx="11.500" cy="10.800" r="4.600" fill="#ffeceb" /><path d="M10 14h3v4h-3z" fill="#ffdad8" /><path d="M4 21c1-4 4-4.500 7.500-4.500s6.500.5 7.500 6.500c-5 3-11.500 2-15-2z" fill="#ffb9b7" /></>
  ),
  "Account Settings": (
    <><g fill="#6b78ee">{[0, 60, 120].map((r) => <rect key={r} x="8.800" y=".3" width="8.400" height="25.400" rx="2" transform={`rotate(${r} 13 13)`} />)}<circle cx="13" cy="13" r="9.300" /></g><circle cx="13" cy="13" r="4" fill="#fff" /></>
  ),
};
function List({ rows }: { rows: string[] }) {
  return (
    <div className="relative mt-[10px] bg-white px-4">
      {rows.map((r, i) => (
        <div key={r} className={`flex h-[50px] items-center pr-1 pl-[2px] ${i < rows.length - 1 ? "border-b border-[#f5f6f7]" : ""}`}>
          <svg viewBox="0 0 26 26" className="size-[26px]">{rowIcons[r]}</svg>
          <span className="mb-[2px] ml-3 text-[14px] leading-5 text-[#323233]">{r}</span>
          <svg viewBox="0 0 8 14" className="mb-[6px] ml-auto h-[14px] w-2"><path d="M1 1l6 6-6 6" fill="none" stroke="#969799" strokeWidth="1.300" /></svg>
        </div>
      ))}
    </div>
  );
}

function Account() {
  return (
    <div className="h-[1931px] w-[750px] bg-[#deffff]">
      <div className="relative h-[617px] px-[15px]">
        <PageArt />
        <div className="relative h-[281px]">
          <div className="flex h-[68px] justify-between pt-[17px]">
            <div className="flex items-center pt-[14px] pl-[3px]">
              <span className="flex h-9 w-9 items-center justify-center overflow-hidden rounded-full bg-[#f8f9fd]">
                <svg viewBox="0 0 36 36" className="size-9">
                  <path d="M7 3l22 5-12 20zM7 3l13 9 9-4M20 12l-3 16" fill="none" stroke="#f2243c" strokeWidth="1.600" />
                  <text x="18" y="33.500" textAnchor="middle" fontFamily="Liberation Serif, serif" fontWeight="700" fontSize="7" fill="#f2243c">x Minin</text>
                </svg>
              </span>
              <span className="ml-1 text-[16px] font-bold text-[#323233]">suhasagg@gmail.com</span>
            </div>
            <span className="pr-[5px]"><Calendar /></span>
          </div>
          <div className="mt-[7px] flex items-center justify-center gap-[5px] text-[14px] leading-5 text-[#323233]">
            Total assets
            <svg viewBox="0 0 14 10" className="h-[10px] w-[13px]" fill="none" stroke="#555" strokeWidth=".9"><path d="M.7 5C3-.5 11-.5 13.300 5 11 10.500 3 10.500.7 5z" /><circle cx="7" cy="5" r="2.500" /></svg>
          </div>
          <div className="mt-[4px] text-center text-[18px] leading-6 font-bold text-[#323233]">29.00 TRX</div>
          <div className="mx-[-15px] mt-[12px] flex"><Stat label="Principal" /><Stat label="Interest" /><Stat label="Income" /></div>
          <div className="mt-[21px] flex">
            <Action label="My investment">
              <path d="M9 4H4.500v20H22V4h-4.500M9.500 2.500h8v3.500h-8zM8.500 10h8M8.500 14h5.500M24.500 8v20H8v-2" />
            </Action>
            <Action label="Transaction details"><path d="M5.500 6h19L15 23.500z" strokeWidth="2.200" /></Action>
            <Action label="Telegram Customer Service">
              <path d="M4.500 12C5 -1 25 -1 25.500 12M7 11.500v10c-3 0-5-2-5-5s2-5 5-5zM23 11.500v10c3 0 5-2 5-5s-2-5-5-5zM26 20c-1 4-4 6-8 6.500M13 25h5v3h-5z" />
            </Action>
          </div>
        </div>
        <div className="relative flex h-[66px] items-center rounded-[5px] bg-white pr-5 pl-[15px]">
          <div className="flex flex-col">
            <span className="text-[12px] leading-[18px] text-[#969799]">Available balance</span>
            <span className="mt-[4px] text-[14px] leading-5 font-bold text-black">29.00TRX</span>
          </div>
          <span className="ml-auto flex h-6 items-center rounded-[4px] bg-[#ffc9da] px-[10px] text-[12px] text-[#323233]">Recharge</span>
          <span className="ml-[10px] flex h-6 w-[70px] items-center justify-center rounded-[4px] bg-[#22cd88] text-[12px] text-[#1989fa]">Withdraw</span>
        </div>
        <List rows={["My Wallet", "Recharge Record", "Withdrawal Record"]} />
        <List rows={["My team", "Account Settings"]} />
      </div>
    </div>
  );
}

function NavItem({ label, active, children }: { label: string; active?: boolean; children: React.ReactNode }) {
  return (
    <div className={`flex flex-1 flex-col items-center pt-[8px] text-[12px] leading-4 ${active ? "text-[#1a78f0]" : "text-[#969696]"}`}>
      <svg viewBox="0 0 26 26" className="mb-[4px] size-[26px]" fill="none" stroke="currentColor" strokeWidth="1.700">{children}</svg>
      {label}
    </div>
  );
}
const BottomNav = () => (
  <div className="relative flex h-[60px] bg-white shadow-[0_0_8px_rgba(0,0,0,0.16)]">
    <NavItem label="Home"><path d="M4 10.500L13 3.500l9 7V22.500H4zM13 14v8" /></NavItem>
    <NavItem label="Invest"><circle cx="13" cy="13" r="10" /><path d="M17 9.500h-5.500c-3 0-3 3.500 0 3.500h3c3 0 3 3.500 0 3.500H9M13 6.500v3M13 16.500v3" strokeWidth="2.200" /></NavItem>
    <NavItem label="Telegram"><path d="M3.500 13C4-2 22-2 22.500 13M23 19c-1 3-4 4.500-8 5" /><ellipse cx="4" cy="15.500" rx="2.500" ry="3.700" /><ellipse cx="22" cy="15.500" rx="2.500" ry="3.700" /><circle cx="14.500" cy="23.700" r="1.300" fill="currentColor" /></NavItem>
    <NavItem label="Account" active><g fill="currentColor" stroke="none"><circle cx="13" cy="7.800" r="6.500" /><path d="M4 24.300v-2c0-4 2.500-6 6-6h6c3.500 0 6 2 6 6v2z" /></g></NavItem>
  </div>
);

const Zip = () => (
  <svg viewBox="0 0 16 16" className="size-4"><path d="M1 1h14v14H1z" fill="#b08d62" /><path d="M1 1h14v5H1z" fill="#cfae84" /><path d="M8 1v6M4 6h8" stroke="#f3e6d2" strokeWidth="1.200" /></svg>
);
const Word = () => (
  <svg viewBox="0 0 16 16" className="size-4"><path d="M1.500 0h10L14.500 3v13h-13z" fill="#3b6a84" /><path d="M2.500 1h8.500v3h2.500v5h-11z" fill="#8fc0cc" /><path d="M11 0l3.500 3.500H11z" fill="#eee" /><path d="M4 4.500l2 8 2-6 2 6 2-8" fill="none" stroke="#24465a" strokeWidth="1.500" /></svg>
);
const downloads = [
  { icon: <Zip />, text: "BackgroundIn....zip", w: 138, cls: "w-[237px]" },
  { icon: <Word />, text: "SuhasAggar....docx", w: 137, cls: "w-[233px]" },
  { icon: <Word />, text: "SuhasAggar....docx", w: 137, cls: "w-[233px]" },
];
const DownloadBar = () => (
  <div className="relative flex h-[61px] items-center border-t border-[#d6d7d9] bg-white pb-px font-['Noto_Sans',sans-serif] text-[15px] text-[#3c4043]">
    {downloads.map((d, i) => (
      <div key={i} className={`flex h-12 items-center border-r border-[#cccdcf] ${i === 0 ? "pl-5" : "pl-4"} ${d.cls}`}>
        {d.icon}
        <Fit w={d.w} className="ml-[13px]">{d.text}</Fit>
        <svg viewBox="0 0 12 12" className="mr-[17px] ml-auto size-3"><path d="M2 8.500L6 4l4 4.500" fill="none" stroke="#5f6368" strokeWidth="1.600" /></svg>
      </div>
    ))}
    <div className="ml-auto flex h-[34px] w-[89px] items-center justify-center rounded-[4px] border border-[#d6d8dc] text-[14px] font-semibold text-[#1a73e8]">
      <Fit w={57}>Show all</Fit>
    </div>
    <svg viewBox="0 0 12 12" className="mr-3 ml-3 size-3 text-[#6a6d71]"><path d="M1.200 1.200l9.600 9.600M10.800 1.200l-9.600 9.600" stroke="currentColor" strokeWidth="1.800" /></svg>
  </div>
);

export default function App() {
  return (
    <div className="h-[2160px] w-[3840px] overflow-hidden bg-[#03140a] font-['Liberation_Sans',Arial,sans-serif]">
      <TopPanel />
      <div className="flex h-[2136px]">
        <Launcher />
        <div className="h-[2136px] w-[5px] shrink-0 border-l border-[#8a8a86] bg-[#f1eeeb]">
          <div className="h-[43px] bg-[#3c3836]" />
        </div>
        <div className="w-[3771px] shrink-0 bg-[#3c3836]">
          <TabStrip />
          <div className="h-[2095px] bg-[#dee1e6] pr-[3px] pl-1">
            <Toolbar />
            <div className="flex h-[1931px] justify-center overflow-hidden bg-white">
              <Account />
            </div>
            <BottomNav />
            <DownloadBar />
          </div>
        </div>
      </div>
    </div>
  );
}
